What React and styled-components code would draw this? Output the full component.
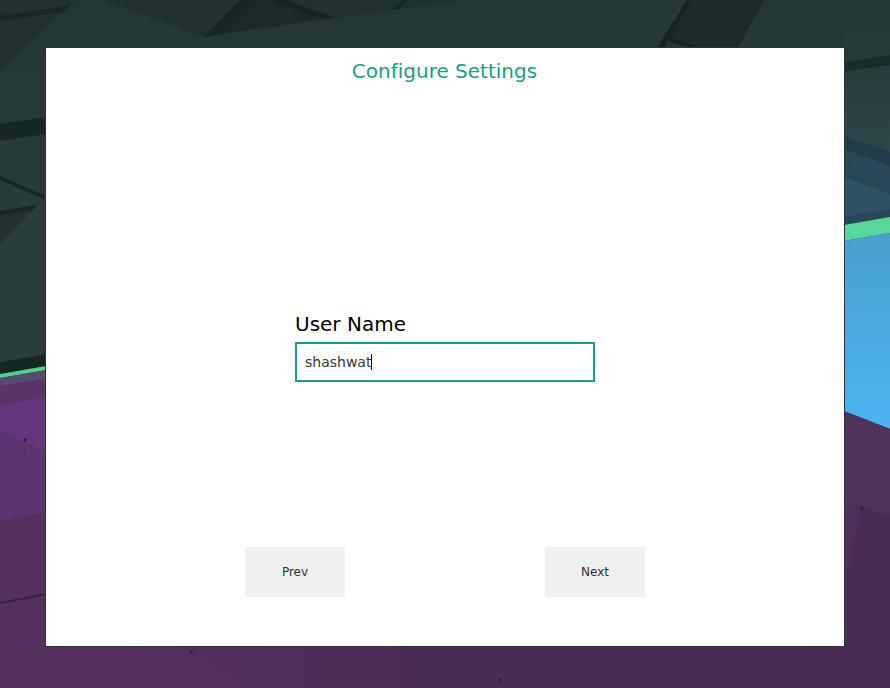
import React from "react";
import styled, { createGlobalStyle } from "styled-components";

const GlobalStyle = createGlobalStyle`
  *, *::before, *::after { box-sizing: border-box; }
  body { margin: 0; overflow: hidden; font-family: "DejaVu Sans", sans-serif; }
`;

const Desktop = styled.main`
  position: relative;
  display: flex;
  justify-content: center;
  width: 890px;
  height: 688px;
  padding-top: 47px;
  overflow: hidden;
  background: #243433;
`;

const Backdrop = styled.svg`
  position: absolute;
  inset: 0;
  width: 890px;
  height: 688px;
`;

const Window = styled.section`
  position: relative;
  display: flex;
  flex-direction: column;
  align-items: center;
  width: 800px;
  height: 600px;
  border: 1px solid #333335;
  background: #fff;
`;

const Title = styled.h1`
  margin: 11px 0 0;
  padding-right: 1px;
  font-size: 20px;
  font-weight: 400;
  line-height: 24px;
  font-variant-ligatures: none;
  color: #16a085;
`;

const Field = styled.div`
  display: flex;
  flex-direction: column;
  gap: 6px;
  width: 300px;
  margin-top: 229px;
`;

const Label = styled.label`
  font-size: 20px;
  line-height: 24px;
  color: #000;
`;

const TextBox = styled.div`
  display: flex;
  align-items: center;
  height: 40px;
  padding: 0 8px;
  border: 2px solid #16a085;
  background: #fff;
  font-size: 14px;
  line-height: 16px;
  color: #353637;
`;

const Caret = styled.span`
  width: 1px;
  height: 16px;
  background: #111;
`;

const Actions = styled.nav`
  display: flex;
  justify-content: space-between;
  width: 400px;
  margin-top: 165px;
`;

const Button = styled.button`
  width: 100px;
  height: 50px;
  padding: 0;
  border: 0;
  background: #f0f0f0;
  font-family: inherit;
  font-size: 12px;
  color: #2e3032;
`;

function Wallpaper() {
  return (
    <Backdrop viewBox="0 0 890 688" aria-hidden="true">
      <defs>
        <linearGradient id="slate" gradientUnits="userSpaceOnUse" x1="0" y1="0" x2="0" y2="363">
          <stop offset="0" stopColor="#243635" />
          <stop offset="1" stopColor="#2c3f3d" />
        </linearGradient>
        <linearGradient id="steel" x1="0" y1="0" x2="0" y2="1">
          <stop offset="0" stopColor="#253736" />
          <stop offset="1" stopColor="#344f58" />
        </linearGradient>
        <linearGradient id="sky" x1="0" y1="0" x2="0" y2="1">
          <stop offset="0" stopColor="#4a9fcd" />
          <stop offset="1" stopColor="#4cb4f2" />
        </linearGradient>
        <linearGradient id="violet" x1="0" y1="0" x2="1" y2="0">
          <stop offset="0" stopColor="#563160" />
          <stop offset="0.25" stopColor="#502f5d" />
          <stop offset="0.5" stopColor="#492c54" />
          <stop offset="1" stopColor="#492e54" />
        </linearGradient>
      </defs>
      <path d="M0 0H890V688H0Z" fill="url(#violet)" />
      <path d="M0 0H890V100H46V356L0 363Z" fill="url(#slate)" />

      <path d="M0 0H76L0 70Z" fill="#20312f" />
      <path d="M0 16L72 5L64 12L0 21Z" fill="#172725" />
      <path d="M105 0H460L204 37Z" fill="#20312f" />
      <path d="M240 0H256L219 34L204 37Z" fill="#172725" />
      <path d="M256 0H270L300 10L321 19L219 34Z" fill="#1b2a29" />
      <path d="M270 0H285L337 18L321 19Z" fill="#162524" />
      <path d="M402 0L391 10L399 9L408 0Z" fill="#172725" />
      <path d="M688 0H764L738 48H657Z" fill="#1c2b2a" />
      <path d="M687 0H691L665 48H657Z" fill="#152422" />
      <path d="M668 40L692 48H665Z" fill="#263634" />
      <path d="M670 37L696 46L690 48L667 41Z" fill="#152422" />

      <path d="M0 124L46 117V134L0 141Z" fill="#172725" />
      <path d="M0 176L46 196V200L0 180Z" fill="#172725" />
      <path d="M0 211L37 205L0 244Z" fill="#20312f" />
      <path d="M0 211L37 205L31 211L0 215Z" fill="#172725" />
      <path d="M0 244L46 197V354L0 362Z" fill="#2b3d3b" />
      <path d="M0 362L46 354V367L0 374Z" fill="#172725" />
      <path d="M0 374L46 366V370L0 378Z" fill="#4dd385" />
      <path d="M0 378L46 370V379L0 386Z" fill="#594a70" />
      <path d="M0 386L46 379V397L0 405Z" fill="#59336a" />
      <path d="M0 405L46 397V512L0 521Z" fill="#5c346f" />
      <path d="M0 405L46 397V452L0 430Z" fill="#66367c" />
      <path d="M0 603L46 594" stroke="#37213f" strokeWidth="1.8" />

      <path d="M844 25H890V230H844Z" fill="url(#steel)" />
      <path d="M844 62L890 55V65L844 72Z" fill="#1c2c2c" />
      <path d="M844 136L890 152V225H844Z" fill="#294857" />
      <path d="M844 136L890 152V166L844 149Z" fill="#213d49" />
      <path d="M844 149L856 157L844 177Z" fill="#284753" />
      <path d="M844 177L890 194V210L844 217Z" fill="#2f5366" />
      <path d="M844 217L890 209V219L844 226Z" fill="#284759" />
      <path d="M844 225L890 217V233L844 241Z" fill="#59d69a" />
      <path d="M844 241L890 233V429L844 411Z" fill="url(#sky)" />
      <path d="M844 411L890 429V515L844 502Z" fill="#4c345b" />
      <path d="M844 502L861 509L849 568H844Z" fill="#4f2f5c" />
      <path d="M844 608L890 625V688H844Z" fill="#4a2d56" />
      <path d="M687 647L772 688" stroke="#3f2848" strokeWidth="1" opacity="0.55" />
      <path d="M191 655L248 688H90Z" fill="#553363" opacity="0.35" />

      <g fill="#291b34">
        <circle cx="25" cy="440" r="1.4" />
        <circle cx="191" cy="652" r="1.4" />
        <circle cx="500" cy="680" r="1.4" />
        <circle cx="862" cy="508" r="1.5" />
      </g>
      <g stroke="#3b2547" opacity="0.25">
        <path d="M25 441V456M191 653V668M500 681V688M862 509V523" />
      </g>
    </Backdrop>
  );
}

export default function App() {
  return (
    <>
      <GlobalStyle />
      <Desktop>
        <Wallpaper />
        <Window>
          <Title>Configure Settings</Title>
          <Field>
            <Label id="user-name">User Name</Label>
            <TextBox role="textbox" aria-labelledby="user-name" tabIndex={0}>
              shashwat
              <Caret />
            </TextBox>
          </Field>
          <Actions>
            <Button type="button">Prev</Button>
            <Button type="button">Next</Button>
          </Actions>
        </Window>
      </Desktop>
    </>
  );
}
